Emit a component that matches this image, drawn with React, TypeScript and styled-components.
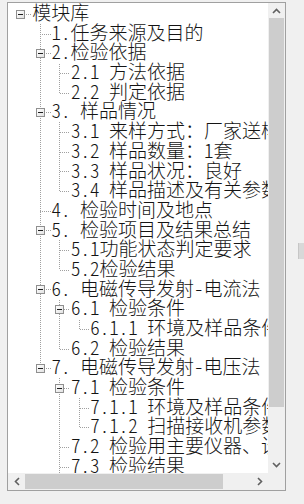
import React from "react"
import styled, { createGlobalStyle, css } from "styled-components"

const ROW = 19.7
const INDENT = 19.4

type TreeNode = { label: string; children?: TreeNode[] }

type FlatRow = {
  label: string
  depth: number
  guides: boolean[]
  last: boolean
  open: boolean
}

const tree: TreeNode = {
  label: "模块库",
  children: [
    { label: "1.任务来源及目的" },
    {
      label: "2.检验依据",
      children: [{ label: "2.1 方法依据" }, { label: "2.2 判定依据" }],
    },
    {
      label: "3. 样品情况",
      children: [
        { label: "3.1 来样方式：厂家送样" },
        { label: "3.2 样品数量：1套" },
        { label: "3.3 样品状况：良好" },
        { label: "3.4 样品描述及有关参数" },
      ],
    },
    { label: "4. 检验时间及地点" },
    {
      label: "5. 检验项目及结果总结",
      children: [{ label: "5.1功能状态判定要求" }, { label: "5.2检验结果" }],
    },
    {
      label: "6. 电磁传导发射-电流法",
      children: [
        { label: "6.1 检验条件", children: [{ label: "6.1.1 环境及样品条件" }] },
        { label: "6.2 检验结果" },
      ],
    },
    {
      label: "7. 电磁传导发射-电压法",
      children: [
        {
          label: "7.1 检验条件",
          children: [
            { label: "7.1.1 环境及样品条件" },
            { label: "7.1.2 扫描接收机参数" },
          ],
        },
        { label: "7.2 检验用主要仪器、设备" },
        { label: "7.3 检验结果" },
        { label: "7.4 检验结论" },
      ],
    },
  ],
}

function flatten(
  node: TreeNode,
  depth: number,
  guides: boolean[],
  last: boolean,
  out: FlatRow[]
) {
  out.push({ label: node.label, depth, guides, last, open: !!node.children })
  const kids = node.children || []
  kids.forEach((c, i) => {
    // level 0 is the single root, it never draws a sibling line
    const next = [...guides, depth === 0 ? false : !last]
    flatten(c, depth + 1, next, i === kids.length - 1, out)
  })
}

const rows: FlatRow[] = []
flatten(tree, 0, [], true, rows)

const GlobalStyle = createGlobalStyle`
  html, body {
    margin: 0;
    padding: 0;
    background: #f0f0f0;
  }
  body {
    width: 304px;
    height: 504px;
    overflow: hidden;
    font-family: "Noto Sans CJK SC", sans-serif;
  }
`

const Page = styled.div`
  display: flex;
  width: 304px;
  height: 504px;
  box-sizing: border-box;
  padding: 2px 0 0 7px;
`

const TreeFrame = styled.div`
  width: 279px;
  height: 489px;
  box-sizing: border-box;
  border: 1px solid #a0a0a0;
  background: #fff;
  display: grid;
  grid-template-columns: 1fr 17px;
  grid-template-rows: 1fr 17px;
`

const Viewport = styled.div`
  overflow: hidden;
  padding-top: 1px;
`

const dotsV = css`
  background-image: repeating-linear-gradient(
    to bottom,
    #a0a0a0 0 1px,
    transparent 1px 2px
  );
  background-attachment: fixed;
`

const dotsH = css`
  background-image: repeating-linear-gradient(
    to right,
    #a0a0a0 0 1px,
    transparent 1px 2px
  );
  background-attachment: fixed;
`

const Row = styled.div`
  display: flex;
  height: ${ROW}px;
  padding-left: 2.8px;
`

const Guide = styled.span<{ $on: boolean }>`
  position: relative;
  flex: 0 0 ${INDENT}px;
  ${(p) =>
    p.$on &&
    css`
      &::before {
        content: "";
        position: absolute;
        left: 50%;
        top: 0;
        bottom: 0;
        width: 1px;
        ${dotsV}
      }
    `}
`

const Joint = styled.span<{ $root: boolean; $last: boolean }>`
  position: relative;
  flex: 0 0 ${INDENT}px;
  &::before {
    content: "";
    display: ${(p) => (p.$root ? "none" : "block")};
    position: absolute;
    left: 50%;
    top: 0;
    height: ${(p) => (p.$last ? "50%" : "100%")};
    width: 1px;
    ${dotsV}
  }
  &::after {
    content: "";
    position: absolute;
    left: 50%;
    top: 50%;
    width: calc(50% + 1px);
    height: 1px;
    ${dotsH}
  }
`

const Expander = styled.span`
  position: absolute;
  z-index: 1;
  left: calc(50% - 4px);
  top: calc(50% - 4px);
  width: 9px;
  height: 9px;
  box-sizing: border-box;
  border: 1px solid #8f8f8f;
  background: linear-gradient(135deg, #ffffff 0%, #e2e2e2 100%);
  &::after {
    content: "";
    position: absolute;
    left: 1px;
    top: 3px;
    width: 5px;
    height: 1px;
    background: #1e1e1e;
  }
`

const Label = styled.span`
  flex: 0 0 auto;
  position: relative;
  top: -2px;
  padding-left: 2px;
  font-family: "Noto Sans CJK SC", sans-serif;
  font-size: 19px;
  font-weight: 300;
  line-height: ${ROW}px;
  font-feature-settings: "hwid" 1;
  white-space: pre;
  color: #141414;
`

const VScroll = styled.div`
  display: flex;
  flex-direction: column;
  background: #f0f0f0;
`

const HScroll = styled.div`
  display: flex;
  background: #f0f0f0;
`

const ArrowButton = styled.div<{ $size: number }>`
  flex: 0 0 ${(p) => p.$size}px;
  display: flex;
  align-items: center;
  justify-content: center;
`

const VThumb = styled.div`
  flex: 0 0 389px;
  margin: 0 1px;
  background: #cdcdcd;
`

const HThumb = styled.div`
  flex: 0 0 198px;
  margin: 1px 0;
  background: #cdcdcd;
`

const Spacer = styled.div`
  flex: 1;
`

const Corner = styled.div`
  background: #f0f0f0;
`

const SideStrip = styled.div`
  flex: 1;
  display: flex;
  align-items: center;
  justify-content: flex-end;
`

const Grip = styled.div`
  width: 5px;
  height: 16px;
  margin-bottom: 4px;
  background: #d8d8d8;
  border-left: 1px solid #c6c6c6;
`

const chevrons: Record<string, { w: number; h: number; d: string }> = {
  up: { w: 9, h: 6, d: "M1 5 L4.5 1.5 L8 5" },
  down: { w: 9, h: 6, d: "M1 1 L4.5 4.5 L8 1" },
  left: { w: 6, h: 9, d: "M5 1 L1.5 4.5 L5 8" },
  right: { w: 6, h: 9, d: "M1 1 L4.5 4.5 L1 8" },
}

function Chevron({ dir }: { dir: "up" | "down" | "left" | "right" }) {
  const c = chevrons[dir]
  return (
    <svg width={c.w} height={c.h} viewBox={`0 0 ${c.w} ${c.h}`}>
      <path d={c.d} fill="none" stroke="#606060" strokeWidth={1.6} />
    </svg>
  )
}

function App() {
  return (
    <Page>
      <GlobalStyle />
      <TreeFrame>
        <Viewport>
          {rows.map((r, i) => (
            <Row key={i}>
              {r.guides.map((g, k) => (
                <Guide key={k} $on={g} />
              ))}
              <Joint $root={r.depth === 0} $last={r.last}>
                {r.open && <Expander />}
              </Joint>
              <Label>{r.label}</Label>
            </Row>
          ))}
        </Viewport>
        <VScroll>
          <ArrowButton $size={15}>
            <Chevron dir="up" />
          </ArrowButton>
          <VThumb />
          <Spacer />
          <ArrowButton $size={17}>
            <Chevron dir="down" />
          </ArrowButton>
        </VScroll>
        <HScroll>
          <ArrowButton $size={17}>
            <Chevron dir="left" />
          </ArrowButton>
          <HThumb />
          <Spacer />
          <ArrowButton $size={17}>
            <Chevron dir="right" />
          </ArrowButton>
        </HScroll>
        <Corner />
      </TreeFrame>
      <SideStrip>
        <Grip />
      </SideStrip>
    </Page>
  )
}

export default App
